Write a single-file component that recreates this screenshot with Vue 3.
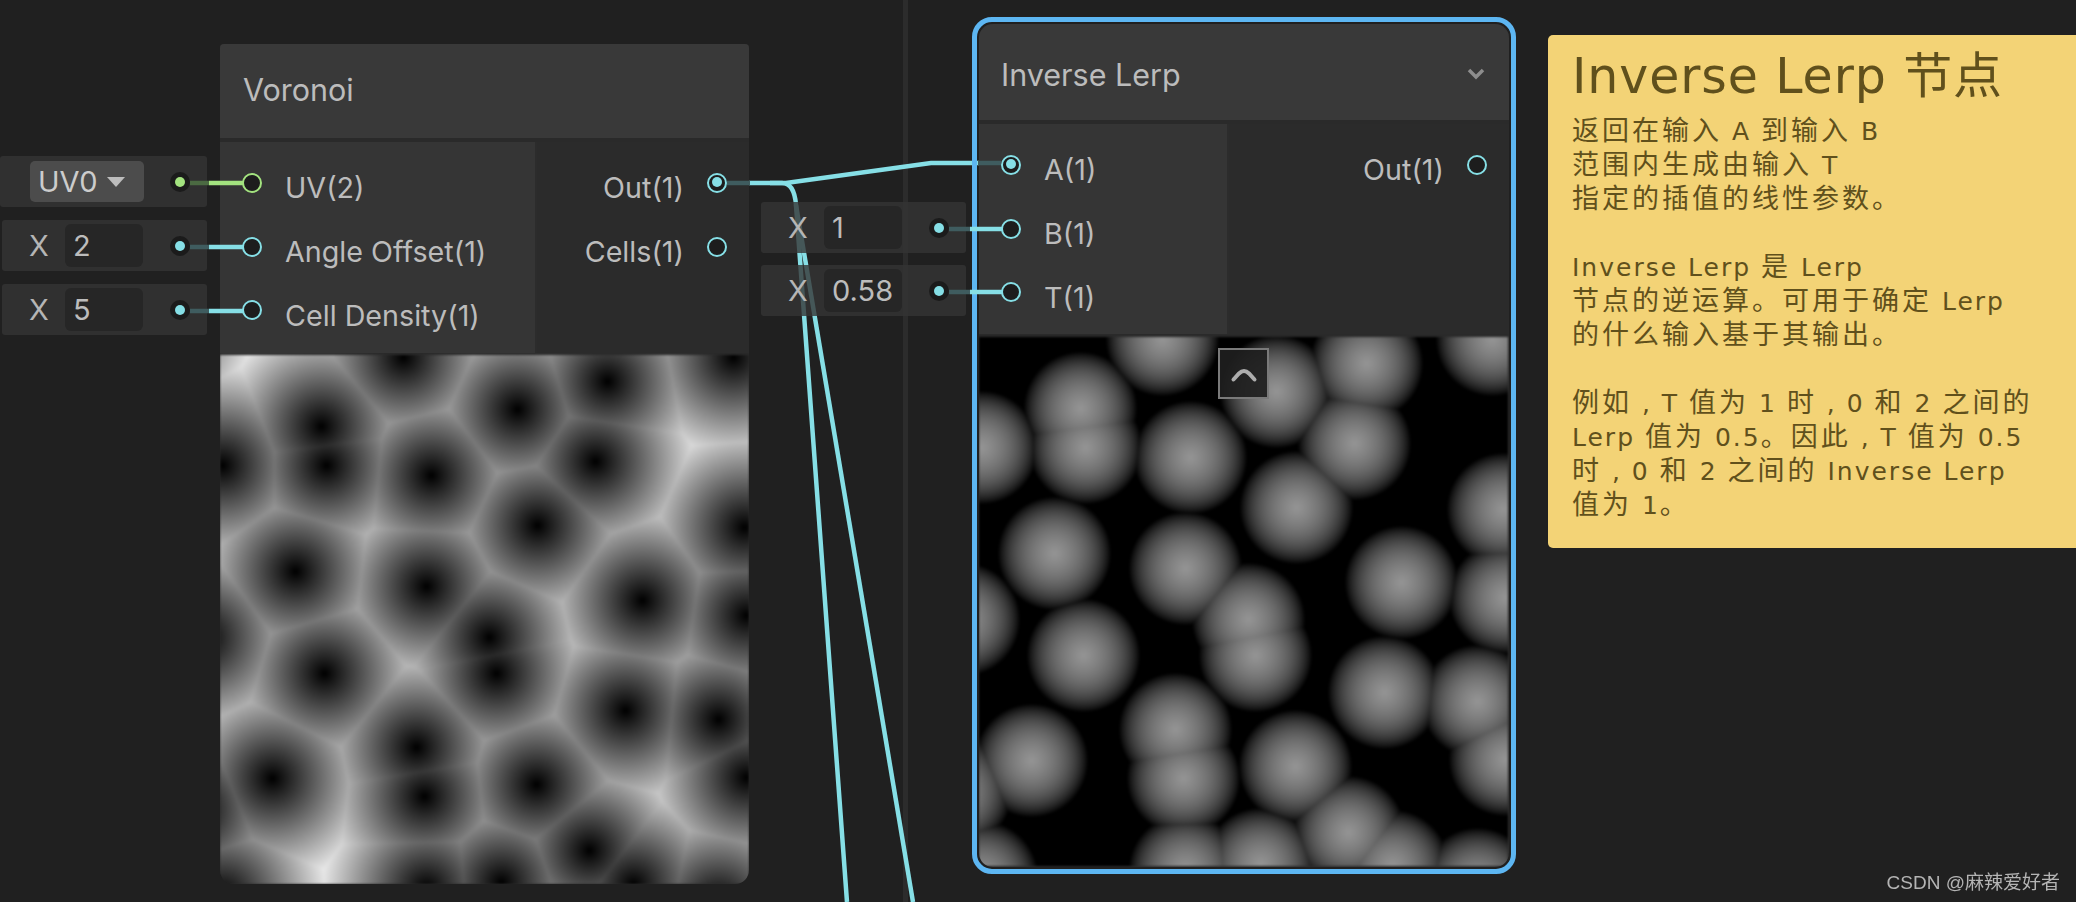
<template>
  <div class="stage">
    <div class="divider"></div>

    <!-- wires that run behind the nodes and the value stubs -->
    <svg class="wires" width="2076" height="902" fill="none">
      <path class="wire" d="M735 183H786L931 163H990" />
      <path class="wire" d="M770 183H782C791 183 795 192 796 205L847 902" />
      <path class="wire" d="M796 205L913 902" />
    </svg>

    <div
      v-for="s in stubs"
      :key="s.y"
      class="stub"
      :style="{ left: s.x + 'px', top: s.y + 'px', width: s.w + 'px' }"
    >
      <div v-if="s.dropdown" class="dropdown">
        <span>UV0</span>
        <i class="caret"></i>
      </div>
      <template v-else>
        <span class="axis">X</span>
        <div class="field">{{ s.value }}</div>
      </template>
      <span class="dot"><i :style="{ background: s.color }"></i></span>
    </div>

    <div class="node voronoi">
      <div class="node-title">Voronoi</div>
      <div class="node-body">
        <div class="col-in">
          <div v-for="l in voronoiIn" :key="l.name" class="row">
            <span class="port" :style="{ borderColor: l.color }"></span>
            <span class="label">{{ l.name }}</span>
          </div>
        </div>
        <div class="col-out">
          <div v-for="l in voronoiOut" :key="l.name" class="row row-out">
            <span class="label">{{ l.name }}</span>
            <span class="port" :class="{ on: l.on }"></span>
          </div>
        </div>
      </div>
      <canvas ref="voronoiCanvas" class="preview" width="529" height="529"></canvas>
    </div>

    <div class="selected">
      <div class="node lerp">
        <div class="node-title">
          <span>Inverse Lerp</span>
          <svg class="chevron" width="20" height="12" viewBox="0 0 20 12" fill="none">
            <path d="M3 2L10 9L17 2" stroke="#8d8d8d" stroke-width="3.5" />
          </svg>
        </div>
        <div class="node-body">
          <div class="col-in col-in-lerp">
            <div v-for="l in lerpIn" :key="l.name" class="row">
              <span class="port" :class="{ on: l.on }"></span>
              <span class="label">{{ l.name }}</span>
            </div>
          </div>
          <div class="col-out">
            <div class="row row-out">
              <span class="label">Out(1)</span>
              <span class="port"></span>
            </div>
          </div>
        </div>
        <div class="preview-wrap">
          <canvas ref="lerpCanvas" class="preview" width="529" height="529"></canvas>
          <div class="collapse">
            <svg width="28" height="18" viewBox="0 0 28 18" fill="none">
              <path d="M3.5 14.5L9 8.5Q14 3.5 19 8.5L24.500 14.500" stroke="#adadad" stroke-width="4" stroke-linecap="round" />
            </svg>
          </div>
        </div>
      </div>
    </div>

    <!-- short pieces between the sockets, these sit on top of the nodes -->
    <svg class="wires top" width="2076" height="902" fill="none">
      <path d="M190 183H209" stroke="#4b6a42" stroke-width="4.5" />
      <path d="M209 183H243" stroke="#a3e37f" stroke-width="4.5" />
      <template v-for="y in [247, 311]" :key="y">
        <path :d="`M190 ${y}H209`" class="dim" />
        <path :d="`M209 ${y}H243`" class="wire" />
      </template>
      <template v-for="y in [229, 292]" :key="y">
        <path :d="`M949 ${y}H970`" class="dim" />
        <path :d="`M970 ${y}H1002`" class="wire" />
      </template>
      <path d="M727 183H750" class="dim" />
      <path d="M978 163H1001" class="dim" />
    </svg>

    <div class="note">
      <h1>Inverse Lerp 节点</h1>
      <div v-for="(block, b) in note" :key="b" class="note-block">
        <div v-for="(line, i) in block" :key="i" class="note-line">
          <span v-for="(run, r) in runs(line)" :key="r" :class="{ cjk: isCjk(run) }">{{ run }}</span>
        </div>
      </div>
    </div>

    <div class="mark">CSDN @麻辣爱好者</div>
  </div>
</template>

<script setup>
import { ref, onMounted } from 'vue'

const CYAN = '#86dfe6'

const stubs = [
  { x: 0, y: 156, w: 207, dropdown: true, color: '#a3e37f' },
  { x: 2, y: 220, w: 205, value: '2', color: CYAN },
  { x: 2, y: 284, w: 205, value: '5', color: CYAN },
  { x: 761, y: 202, w: 205, value: '1', color: CYAN },
  { x: 761, y: 265, w: 205, value: '0.58', color: CYAN },
]

const voronoiIn = [
  { name: 'UV(2)', color: '#a3e37f' },
  { name: 'Angle Offset(1)', color: CYAN },
  { name: 'Cell Density(1)', color: CYAN },
]
const voronoiOut = [
  { name: 'Out(1)', on: true },
  { name: 'Cells(1)', on: false },
]
const lerpIn = [
  { name: 'A(1)', on: true },
  { name: 'B(1)', on: false },
  { name: 'T(1)', on: false },
]

const note = [
  ['返回在输入 A 到输入 B', '范围内生成由输入 T', '指定的插值的线性参数。'],
  ['Inverse Lerp 是 Lerp', '节点的逆运算。可用于确定 Lerp', '的什么输入基于其输出。'],
  [
    '例如 , T 值为 1 时 , 0 和 2 之间的',
    'Lerp 值为 0.5。因此 , T 值为 0.5',
    '时 , 0 和 2 之间的 Inverse Lerp',
    '值为 1。',
  ],
]

// the note's Chinese is spaced wider than its Latin text
const runs = (line) => line.split(/([\u4e00-\u9fff。]+)/).filter(Boolean)
const isCjk = (run) => /[\u4e00-\u9fff。]/.test(run)

// cell centres read off the preview, in preview pixels
const seeds = [
  [183, 2], [387, 26], [513, 2], [297, 54], [101, 71], [106, 110], [2, 110], [375, 106],
  [211, 120], [317, 170], [524, 172], [75, 216], [206, 231], [422, 245], [526, 260],
  [269, 282], [276, 318], [104, 318], [-16, 282], [405, 355], [498, 364], [196, 392],
  [52, 423], [204, 441], [316, 429], [526, 422], [369, 495], [281, 527], [413, 529],
  [206, 533], [-24, 454], [498, 547], [2, 540], [-70, -30],
]

const voronoiCanvas = ref(null)
const lerpCanvas = ref(null)

const paint = (canvas, shade) => {
  const ctx = canvas.getContext('2d')
  const img = ctx.createImageData(529, 529)
  for (let y = 0; y < 529; y++) {
    for (let x = 0; x < 529; x++) {
      let min = 1e9
      for (const [sx, sy] of seeds) {
        const d = (x - sx) * (x - sx) + (y - sy) * (y - sy)
        if (d < min) min = d
      }
      const v = Math.round(255 * shade(Math.sqrt(min) / 98))
      const i = (y * 529 + x) * 4
      img.data[i] = img.data[i + 1] = img.data[i + 2] = v
      img.data[i + 3] = 255
    }
  }
  ctx.putImageData(img, 0, 0)
}

onMounted(() => {
  paint(voronoiCanvas.value, (a) => Math.min(0.92, a * 0.85))
  // what the Inverse Lerp node computes with A = voronoi, B = 1, T = 0.58
  paint(lerpCanvas.value, (a) => Math.max(0, (0.58 - a) / Math.max(0.001, 1 - a)))
})
</script>

<style>
html,
body {
  margin: 0;
  background: #202020;
}
</style>

<style scoped>
.stage {
  position: relative;
  width: 2076px;
  height: 902px;
  overflow: hidden;
  background: #202020;
  font-family: Inter, 'Liberation Sans', sans-serif;
  color: #bcbcbc;
}

/* --- wires --- */
.wires {
  position: absolute;
  left: 0;
  top: 0;
}
.wires.top {
  pointer-events: none;
}
.wire {
  stroke: #86dfe6;
  stroke-width: 4.5;
}
.dim {
  stroke: #3f5c5f;
  stroke-width: 4.5;
}
.divider {
  position: absolute;
  left: 903px;
  top: 0;
  width: 5px;
  height: 902px;
  background: #2c2c2c;
}

/* --- value stubs left of the sockets --- */
.stub {
  position: absolute;
  height: 51px;
  box-sizing: border-box;
  display: flex;
  align-items: center;
  padding-left: 27px;
  background: rgba(52, 52, 52, 0.8);
  border-radius: 3px;
  font-size: 29px;
}
.axis {
  width: 36px;
  color: #b5b5b5;
}
.field {
  width: 78px;
  height: 43px;
  box-sizing: border-box;
  padding-left: 8px;
  line-height: 43px;
  background: #262626;
  border-radius: 6px;
}
.dropdown {
  width: 114px;
  height: 41px;
  margin-left: 3px;
  box-sizing: border-box;
  padding-left: 8px;
  display: flex;
  align-items: center;
  gap: 9px;
  background: #4c4c4c;
  border-radius: 5px;
  color: #cccccc;
}
.caret {
  width: 0;
  height: 0;
  border-left: 9px solid transparent;
  border-right: 9px solid transparent;
  border-top: 10px solid #bdbdbd;
}
.dot {
  position: absolute;
  right: 17px;
  top: 16px;
  width: 20px;
  height: 20px;
  border-radius: 50%;
  background: #1b1b1b;
  display: flex;
  align-items: center;
  justify-content: center;
}
.dot i {
  width: 10px;
  height: 10px;
  border-radius: 50%;
}

/* --- nodes --- */
.node {
  background: #2a2a2a;
}
.voronoi {
  position: absolute;
  left: 220px;
  top: 44px;
  width: 529px;
  height: 840px;
  border-radius: 4px 4px 14px 14px;
  overflow: hidden;
}
.node-title {
  height: 90px;
  padding: 0 17px 4px 23px;
  display: flex;
  align-items: center;
  justify-content: space-between;
  background: #393939;
  border-bottom: 4px solid #2a2a2a;
  font-size: 30.5px;
}
.node-body {
  display: flex;
  height: 211px;
  border-bottom: 2px solid #2a2a2a;
}
.col-in {
  width: 317px;
  box-sizing: border-box;
  padding: 9px 0 0 22px;
  background: #353535;
  border-right: 2px solid #2c2c2c;
}
.col-out {
  flex: 1;
  padding: 9px 22px 0 0;
  background: #2b2b2b;
}
.row {
  height: 63.7px;
  display: flex;
  align-items: center;
  gap: 23px;
  font-size: 28.7px;
}
.label {
  position: relative;
  top: 5px;
}
.row-out {
  justify-content: flex-end;
}
.port {
  position: relative;
  flex: none;
  width: 20px;
  height: 20px;
  box-sizing: border-box;
  border: 2.5px solid #86dfe6;
  border-radius: 50%;
  background: #1d1d1d;
}
.port.on::after {
  content: '';
  position: absolute;
  left: 2.5px;
  top: 2.5px;
  width: 10px;
  height: 10px;
  border-radius: 50%;
  background: #86dfe6;
}
.preview {
  display: block;
  width: 529px;
  height: 529px;
  filter: blur(0.8px);
}

/* --- selected node --- */
.selected {
  position: absolute;
  left: 972px;
  top: 17px;
  width: 544px;
  height: 857px;
  box-sizing: border-box;
  padding: 2px;
  border: 5px solid #5db6f2;
  border-radius: 20px;
  overflow: hidden;
}
.lerp {
  height: 100%;
  border-radius: 14px;
  overflow: hidden;
}
.lerp .node-title {
  height: 92px;
  padding: 4px 23px 0 22px;
}
.lerp .node-body {
  height: 210px;
  border-bottom-width: 3px;
}
.col-in-lerp {
  width: 250px;
}
.preview-wrap {
  position: relative;
}
.collapse {
  position: absolute;
  left: 239px;
  top: 11px;
  width: 51px;
  height: 51px;
  box-sizing: border-box;
  display: flex;
  align-items: center;
  justify-content: center;
  border: 2px solid #7a7a7a;
  background: rgba(30, 30, 30, 0.92);
}

/* --- yellow sticky note --- */
.note {
  position: absolute;
  left: 1548px;
  top: 35px;
  width: 528px;
  height: 513px;
  box-sizing: border-box;
  padding: 9px 10px 0 24px;
  background: #f3d376;
  border-radius: 5px 0 0 5px;
  color: #60501c;
  font-family: 'DejaVu Sans', 'Noto Sans CJK SC', sans-serif;
}
.note h1 {
  margin: 0 0 4px;
  font-size: 49px;
  font-weight: 400;
  line-height: 66px;
  letter-spacing: 0.9px;
  white-space: nowrap;
}
.note-block {
  margin-bottom: 34px;
}
.note-line {
  height: 34px;
  line-height: 34px;
  font-size: 25px;
  letter-spacing: 2px;
  white-space: pre;
}
.cjk {
  font-size: 27px;
  letter-spacing: 3px;
}

.mark {
  position: absolute;
  right: 16px;
  bottom: 8px;
  font-family: 'Liberation Sans', 'Noto Sans CJK SC', sans-serif;
  font-size: 19px;
  color: #b4b4b4;
}
</style>
